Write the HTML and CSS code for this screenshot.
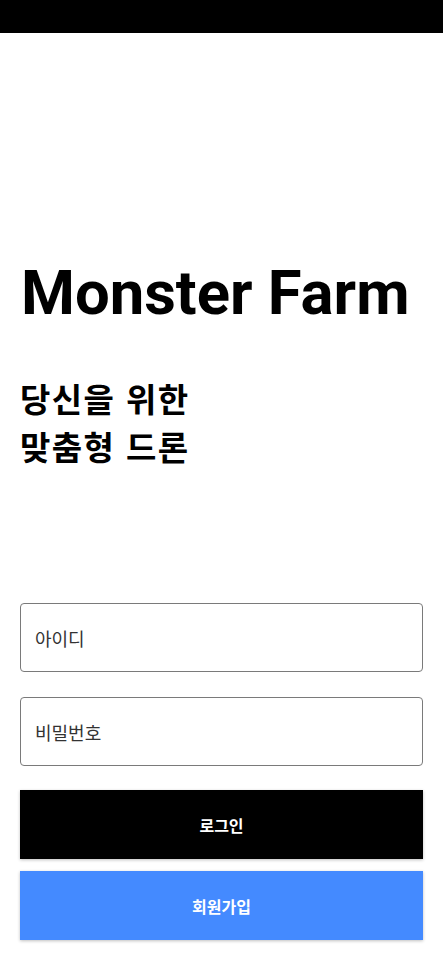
FILE: index.html
```html
<!DOCTYPE html>
<html lang="ko">
<head>
<meta charset="utf-8">
<link rel="stylesheet" href="styles.css">
</head>
<body>
<div class="statusbar"></div>
<main class="content">
  <h1 class="title">Monster Farm</h1>
  <p class="subtitle">당신을 위한<br>맞춤형 드론</p>
  <form class="form">
    <div class="field">아이디</div>
    <div class="field">비밀번호</div>
    <div class="buttons">
      <button type="button" class="btn btn-login">로그인</button>
      <button type="button" class="btn btn-signup">회원가입</button>
    </div>
  </form>
</main>
</body>
</html>
```
FILE: styles.css
```css
html, body {
  margin: 0;
  padding: 0;
  background: #fff;
}
body {
  width: 443px;
  height: 960px;
  overflow: hidden;
  font-family: Roboto, "Noto Sans CJK KR", sans-serif;
}
.statusbar {
  height: 33px;
  background: #000;
}
.content {
  padding: 0 20px;
  display: flex;
  flex-direction: column;
}
.title {
  margin: 225px 0 0 0;
  padding-left: 1px;
  font-family: Roboto, sans-serif;
  font-weight: 700;
  font-size: 61.6px;
  line-height: 70px;
  color: #000;
}
.subtitle {
  margin: 46px 0 0 0;
  font-family: "Noto Sans CJK KR", sans-serif;
  font-weight: 700;
  font-size: 33px;
  letter-spacing: 1.4px;
  line-height: 48px;
  color: #000;
}
.form {
  margin-top: 133px;
  display: flex;
  flex-direction: column;
}
.field {
  box-sizing: border-box;
  height: 69px;
  border: 1px solid #7a7a7a;
  border-radius: 4px;
  padding: 0 14px;
  display: flex;
  align-items: center;
  font-family: "Noto Sans CJK KR", sans-serif;
  font-size: 18px;
  color: #333;
  margin-bottom: 25px;
}
.field + .field {
  margin-bottom: 24px;
}
.buttons {
  display: flex;
  flex-direction: column;
  gap: 12px;
}
.btn {
  height: 69px;
  border: none;
  border-radius: 0;
  font-family: "Noto Sans CJK KR", sans-serif;
  font-weight: 700;
  font-size: 16px;
  color: #fff;
  box-shadow: 0 1px 3px rgba(0,0,0,0.25);
  padding: 0;
}
.btn-login { background: #000; }
.btn-signup { background: #448aff; }
```
